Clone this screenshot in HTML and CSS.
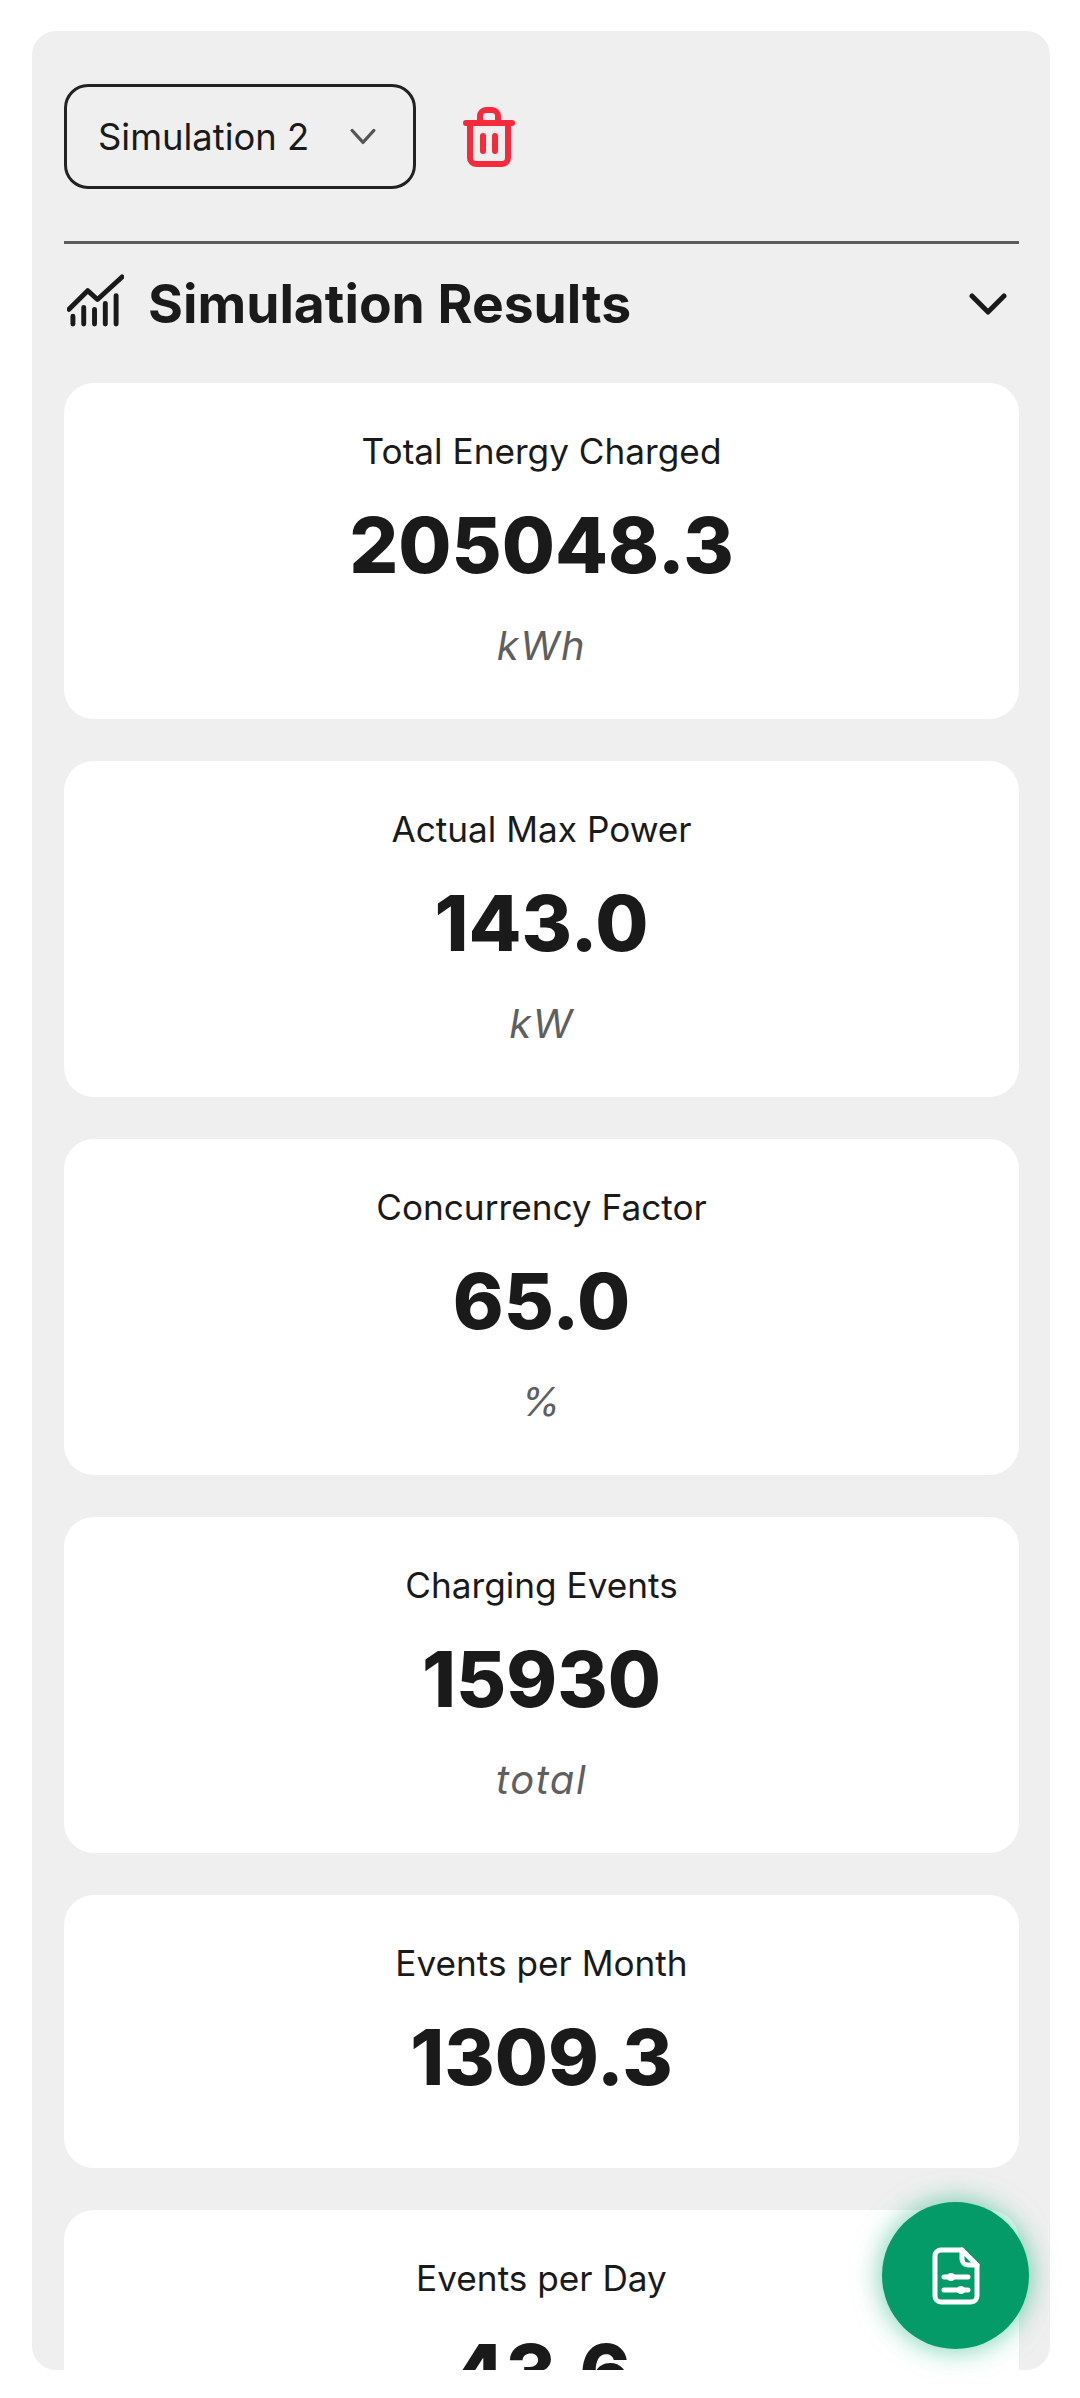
FILE: index.html
```html
<!DOCTYPE html>
<html lang="en">

<head>
  <meta charset="UTF-8">
  <meta name="viewport" content="width=device-width, initial-scale=1">
  <title>Simulation Results</title>
  <link rel="stylesheet" href="styles.css">
</head>

<body>
  <div class="sim_panel">
    <div class="sim_toolbar">
      <div class="sim_select">
        <span>Simulation 2</span>
        <svg class="sim_select_arrow" viewBox="0 0 24 24" fill="none" stroke="#555" stroke-width="3" stroke-linecap="round" stroke-linejoin="round">
          <path d="M2 6l10 11L22 6" />
        </svg>
      </div>
      <button class="sim_delete">
        <svg viewBox="0 0 52 60" fill="none" stroke="#f52a3a" stroke-width="6" stroke-linecap="round" stroke-linejoin="round">
          <path d="M3 16h46" />
          <path d="M17 16V9a6 6 0 0 1 6-6h6a6 6 0 0 1 6 6v7" />
          <path d="M7 16v35a6 6 0 0 0 6 6h26a6 6 0 0 0 6-6V16" />
          <path d="M20 29v15M32 29v15" />
        </svg>
      </button>
    </div>

    <div class="sim_results_header">
      <div class="sim_results_title">
        <svg class="sim_chart_icon" viewBox="0 0 58 54" fill="none" stroke="#1a1a1a" stroke-width="5" stroke-linecap="round" stroke-linejoin="round">
          <path d="M2 36L21 17l10 9L56 3" />
          <path d="M6 51v-8M17 51V34M28 51V36M39 51V30M50 51V22" />
        </svg>
        <h2>Simulation Results</h2>
      </div>
      <svg class="sim_collapse" viewBox="0 0 38 22" fill="none" stroke="#1a1a1a" stroke-width="5" stroke-linecap="round" stroke-linejoin="round">
        <path d="M3 3l16 16L35 3" />
      </svg>
    </div>

    <div class="sim_cards">
      <div class="sim_card">
        <div class="sim_label">Total Energy Charged</div>
        <div class="sim_value">205048.3</div>
        <div class="sim_unit">kWh</div>
      </div>
      <div class="sim_card">
        <div class="sim_label">Actual Max Power</div>
        <div class="sim_value">143.0</div>
        <div class="sim_unit">kW</div>
      </div>
      <div class="sim_card">
        <div class="sim_label">Concurrency Factor</div>
        <div class="sim_value">65.0</div>
        <div class="sim_unit">%</div>
      </div>
      <div class="sim_card">
        <div class="sim_label">Charging Events</div>
        <div class="sim_value">15930</div>
        <div class="sim_unit">total</div>
      </div>
      <div class="sim_card">
        <div class="sim_label">Events per Month</div>
        <div class="sim_value">1309.3</div>
      </div>
      <div class="sim_card">
        <div class="sim_label">Events per Day</div>
        <div class="sim_value">43.6</div>
      </div>
    </div>
  </div>

  <button class="sim_fab">
    <svg viewBox="0 0 48 58" fill="none" stroke="#fff" stroke-width="5" stroke-linecap="round" stroke-linejoin="round">
      <path d="M30 3H9a6 6 0 0 0-6 6v40a6 6 0 0 0 6 6h30a6 6 0 0 0 6-6V18z" />
      <path d="M30 3v9a6 6 0 0 0 6 6h9" />
      <path d="M12 30h24M12 43h24" />
      <circle cx="19" cy="30" r="3" fill="#fff" stroke-width="2" />
      <circle cx="29" cy="43" r="3" fill="#fff" stroke-width="2" />
    </svg>
  </button>
</body>

</html>
```

FILE: styles.css
```css
html,
body {
  margin: 0;
  height: 2398px;
  overflow: hidden;
  background: #fff;
}

body {
  font-family: Inter, "Noto Sans", sans-serif;
  color: #1a1a1a;
}

.sim_panel {
  box-sizing: border-box;
  width: 1018px;
  height: 2339px;
  margin: 31px 0 0 32px;
  padding: 53px 31px 0 32px;
  background: #efefef;
  border-radius: 24px;
  overflow: hidden;
}

/* select + delete */
.sim_toolbar {
  display: flex;
  align-items: center;
  gap: 47px;
  padding-bottom: 52px;
  border-bottom: 3px solid #5c5c5c;
}

.sim_select {
  box-sizing: border-box;
  width: 352px;
  height: 105px;
  padding: 0 37px 0 31px;
  display: flex;
  justify-content: space-between;
  align-items: center;
  border: 3px solid #222;
  border-radius: 24px;
  font-size: 36.4px;
}

.sim_select_arrow {
  width: 26px;
  height: 26px;
}

.sim_delete {
  padding: 0;
  background: none;
  border: none;
  display: flex;
}

.sim_delete svg {
  width: 52px;
  height: 60px;
}

/* collapsible section header */
.sim_results_header {
  box-sizing: border-box;
  height: 139px;
  padding-bottom: 20px;
  display: flex;
  justify-content: space-between;
  align-items: center;
}

.sim_results_title {
  display: flex;
  align-items: center;
  gap: 24px;
  padding-left: 3px;
}

.sim_results_title h2 {
  margin: 0;
  font-size: 53.4px;
  font-weight: 700;
}

.sim_chart_icon {
  width: 57px;
  height: 53px;
  margin-bottom: 6px;
}

.sim_collapse {
  width: 38px;
  height: 22px;
  margin-right: 12px;
}

/* result cards */
.sim_cards {
  display: flex;
  flex-direction: column;
  gap: 42px;
}

.sim_card {
  padding: 48px 0 51px;
  background: #fff;
  border-radius: 30px;
  text-align: center;
}

.sim_label {
  font-size: 35.2px;
  line-height: 41px;
}

.sim_value {
  margin: 27px 0 14px;
  font-size: 77px;
  font-weight: 800;
  line-height: 92px;
}

.sim_unit {
  padding-top: 19px;
  font-size: 40px;
  font-style: italic;
  line-height: 44px;
  letter-spacing: 1.5px;
  color: #5f5f5f;
}

.sim_fab {
  position: absolute;
  left: 882px;
  top: 2202px;
  width: 147px;
  height: 147px;
  padding: 0;
  display: flex;
  justify-content: center;
  align-items: center;
  background: #059b68;
  border: none;
  border-radius: 50%;
  box-shadow: 0 0 28px rgba(5, 175, 115, 0.6);
}

.sim_fab svg {
  width: 48px;
  height: 58px;
}
```
